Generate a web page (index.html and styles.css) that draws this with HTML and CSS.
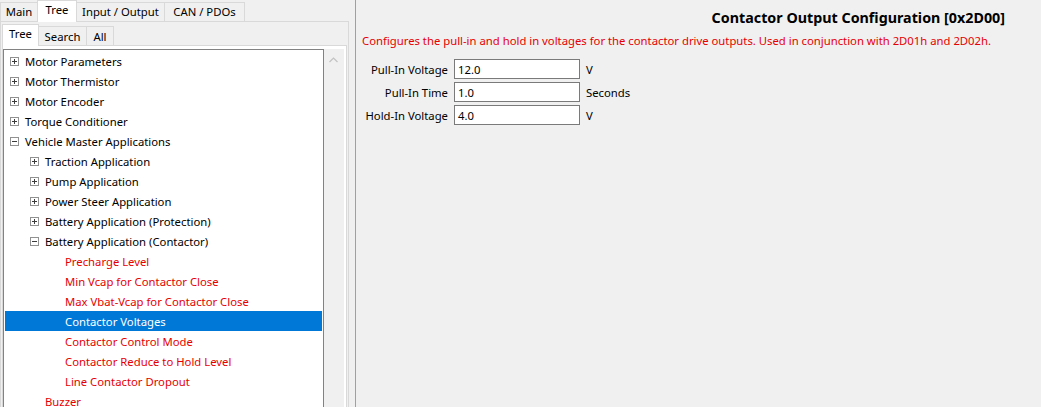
FILE: index.html
```html
<!DOCTYPE html>
<html>
<head>
<meta charset="utf-8">
<link rel="stylesheet" href="styles.css">
</head>
<body>
<div class="app">
  <div class="left">
    <div class="tabs">
      <div class="tab">Main</div>
      <div class="tab sel w-tree">Tree</div>
      <div class="tab w-io">Input / Output</div>
      <div class="tab w-can">CAN / PDOs</div>
    </div>
    <div class="panel">
      <div class="subtabs">
        <div class="stab sel w-s1">Tree</div>
        <div class="stab w-s2">Search</div>
        <div class="stab w-s3">All</div>
      </div>
      <div class="subpanel">
        <div class="tree">
          <div class="row l0"><span class="exp plus"></span><span>Motor Parameters</span></div>
          <div class="row l0"><span class="exp plus"></span><span>Motor Thermistor</span></div>
          <div class="row l0"><span class="exp plus"></span><span>Motor Encoder</span></div>
          <div class="row l0"><span class="exp plus"></span><span>Torque Conditioner</span></div>
          <div class="row l0"><span class="exp minus"></span><span>Vehicle Master Applications</span></div>
          <div class="row l1"><span class="exp plus"></span><span>Traction Application</span></div>
          <div class="row l1"><span class="exp plus"></span><span>Pump Application</span></div>
          <div class="row l1"><span class="exp plus"></span><span>Power Steer Application</span></div>
          <div class="row l1"><span class="exp plus"></span><span>Battery Application (Protection)</span></div>
          <div class="row l1"><span class="exp minus"></span><span>Battery Application (Contactor)</span></div>
          <div class="row l2 leaf"><span class="exp"></span><span>Precharge Level</span></div>
          <div class="row l2 leaf"><span class="exp"></span><span>Min Vcap for Contactor Close</span></div>
          <div class="row l2 leaf"><span class="exp"></span><span>Max Vbat-Vcap for Contactor Close</span></div>
          <div class="row l2 leaf selected"><span class="exp"></span><span>Contactor Voltages</span></div>
          <div class="row l2 leaf"><span class="exp"></span><span>Contactor Control Mode</span></div>
          <div class="row l2 leaf"><span class="exp"></span><span>Contactor Reduce to Hold Level</span></div>
          <div class="row l2 leaf"><span class="exp"></span><span>Line Contactor Dropout</span></div>
          <div class="row l1 leaf"><span class="exp"></span><span>Buzzer</span></div>
        </div>
        <div class="vscroll">
          <svg class="arrow" width="9" height="6" viewBox="0 0 9 6"><polyline points="0.5,5 4.5,1 8.5,5" fill="none" stroke="#c2c2c2" stroke-width="1.2"/></svg>
        </div>
      </div>
    </div>
  </div>
  <div class="splitter"></div>
  <div class="right">
    <div class="title">Contactor Output Configuration [0x2D00]</div>
    <div class="desc">Configures the pull-in and hold in voltages for the contactor drive outputs. Used in conjunction with 2D01h and 2D02h.</div>
    <div class="form">
      <label class="lbl">Pull-In Voltage</label>
      <div class="field">12.0</div>
      <div class="unit">V</div>
      <label class="lbl">Pull-In Time</label>
      <div class="field">1.0</div>
      <div class="unit">Seconds</div>
      <label class="lbl">Hold-In Voltage</label>
      <div class="field">4.0</div>
      <div class="unit">V</div>
    </div>
  </div>
</div>
</body>
</html>
```
FILE: styles.css
```css
html, body {
  margin: 0;
  padding: 0;
  background: #f0f0f0;
}
body {
  font-family: "Noto Sans", "DejaVu Sans", sans-serif;
  font-size: 11.3px;
  color: #000;
  width: 1041px;
  height: 407px;
  overflow: hidden;
}
.app {
  display: flex;
  height: 407px;
}
.left {
  width: 349px;
  flex: none;
  display: flex;
  flex-direction: column;
}
.tabs {
  display: flex;
  align-items: flex-end;
  height: 21px;
  position: relative;
  z-index: 1;
}
.tab {
  box-sizing: border-box;
  height: 19px;
  width: 38px;
  border: 1px solid #d9d9d9;
  border-bottom: none;
  margin-left: -1px;
  background: #f0f0f0;
  display: flex;
  align-items: center;
  justify-content: center;
  padding-bottom: 1px;
}
.tab:first-child { margin-left: 0; }
.tab.sel {
  height: 22px;
  margin-bottom: -1px;
  background: #fff;
  padding-bottom: 5px;
  position: relative;
  z-index: 2;
}
.w-tree { width: 40px; }
.w-io { width: 89px; }
.w-can { width: 81px; }
.panel {
  flex: 1;
  border: 1px solid #d9d9d9;
  border-bottom: none;
  padding: 2px 1px 0 1px;
  display: flex;
  flex-direction: column;
  background: #f0f0f0;
}
.subtabs {
  display: flex;
  align-items: flex-end;
  height: 21px;
  position: relative;
  z-index: 1;
}
.stab {
  box-sizing: border-box;
  height: 19px;
  border: 1px solid #d9d9d9;
  border-bottom: none;
  margin-left: -1px;
  background: #f0f0f0;
  display: flex;
  align-items: center;
  justify-content: center;
  padding-bottom: 0;
}
.stab:first-child { margin-left: 0; }
.stab.sel {
  height: 22px;
  margin-bottom: -1px;
  background: #fff;
  padding-bottom: 5px;
}
.w-s1 { width: 37px; }
.w-s2 { width: 49px; }
.w-s3 { width: 28px; }
.subpanel {
  flex: 1;
  border: 1px solid #d9d9d9;
  border-bottom: none;
  background: #fff;
  padding: 3px 2px 0 0;
  display: flex;
  align-items: stretch;
}
.tree {
  width: 321px;
  box-sizing: border-box;
  border: 1px solid #828282;
  border-bottom: none;
  background: #fff;
  padding: 1px 1px 0 1px;
  overflow: hidden;
}
.row {
  height: 20px;
  display: flex;
  align-items: center;
  white-space: nowrap;
}
.row.l0 { padding-left: 5px; }
.row.l1 { padding-left: 25px; }
.row.l2 { padding-left: 45px; }
.row.leaf { color: #e60000; }
.row.selected {
  background: #0078d7;
  color: #fff;
}
.exp {
  box-sizing: border-box;
  width: 9px;
  height: 9px;
  margin-right: 6px;
  flex: none;
  position: relative;
}
.exp.plus, .exp.minus {
  border: 1px solid #919191;
}
.exp.plus::before, .exp.minus::before {
  content: "";
  position: absolute;
  left: 1px;
  top: 3px;
  width: 5px;
  height: 1px;
  background: #3c3c3c;
}
.exp.plus::after {
  content: "";
  position: absolute;
  left: 3px;
  top: 1px;
  width: 1px;
  height: 5px;
  background: #3c3c3c;
}
.vscroll {
  width: 20px;
  background: #f0f0f0;
  display: flex;
  justify-content: center;
  padding-top: 8px;
}
.arrow { display: block; margin-left: -2px; }
.splitter {
  width: 6px;
  flex: none;
}
.right {
  flex: 1;
  border-left: 1px solid #a0a0a0;
  background: #f0f0f0;
  padding: 8px 36px 0 6px;
}
.title {
  text-align: right;
  font-weight: bold;
  font-size: 14.3px;
  line-height: 20px;
}
.desc {
  color: #e60000;
  line-height: 20px;
  margin-top: 3px;
}
.form {
  margin-top: 8px;
  display: grid;
  grid-template-columns: 86px 126px auto;
  column-gap: 6px;
  row-gap: 3px;
  align-items: center;
}
.lbl {
  text-align: right;
  white-space: nowrap;
}
.field {
  box-sizing: border-box;
  height: 20px;
  border: 1px solid #7a7a7a;
  background: #fff;
  padding-left: 3px;
  display: flex;
  align-items: center;
}
```
